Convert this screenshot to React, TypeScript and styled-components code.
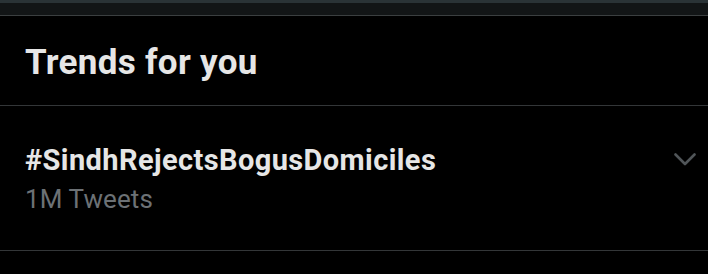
import React from "react";
import styled, { createGlobalStyle } from "styled-components";

const GlobalStyle = createGlobalStyle`
  body {
    margin: 0;
    background: #000;
    font-family: Roboto, "Noto Sans", sans-serif;
  }
`;

const App = () => {
  return (
    <>
      <GlobalStyle />
      <Page>
        <TopBar>
          <TopEdge />
        </TopBar>
        <Header>
          <Title>Trends for you</Title>
        </Header>
        <TrendRow>
          <TrendText>
            <TrendName>#SindhRejectsBogusDomiciles</TrendName>
            <TrendCount>1M Tweets</TrendCount>
          </TrendText>
          <Chevron width="22" height="13" viewBox="0 0 22 13" fill="none">
            <path
              d="M1.5 1.5 L11 11 L20.5 1.5"
              stroke="#505558"
              strokeWidth="2.6"
              strokeLinecap="round"
              strokeLinejoin="round"
            />
          </Chevron>
        </TrendRow>
      </Page>
    </>
  );
};

export default App;

const Page = styled.div`
  width: 708px;
  height: 274px;
  background: #000;
  overflow: hidden;
`;

const TopBar = styled.div`
  height: 15px;
  background: #121516;
  border-bottom: 1px solid #3b3f40;
`;

const TopEdge = styled.div`
  height: 3px;
  background: #2a3336;
`;

const Header = styled.div`
  height: 89px;
  padding: 0 25px;
  display: flex;
  align-items: center;
  border-bottom: 1px solid #333638;
`;

const Title = styled.h2`
  margin: 0;
  padding-top: 4px;
  font-size: 35px;
  font-weight: 700;
  color: #e6e6e6;
  letter-spacing: 0.3px;
`;

const TrendRow = styled.div`
  height: 144px;
  padding: 0 12px 0 25px;
  display: flex;
  align-items: flex-start;
  justify-content: space-between;
  border-bottom: 1px solid #333638;
`;

const TrendText = styled.div`
  display: flex;
  flex-direction: column;
  padding-top: 37px;
`;

const TrendName = styled.div`
  font-size: 29px;
  font-weight: 700;
  color: #e6e6e6;
  line-height: 34px;
  letter-spacing: 0.4px;
`;

const TrendCount = styled.div`
  margin-top: 5px;
  font-size: 26px;
  color: #6c7175;
  line-height: 34px;
  letter-spacing: 0.1px;
`;

const Chevron = styled.svg`
  margin-top: 47px;
`;
